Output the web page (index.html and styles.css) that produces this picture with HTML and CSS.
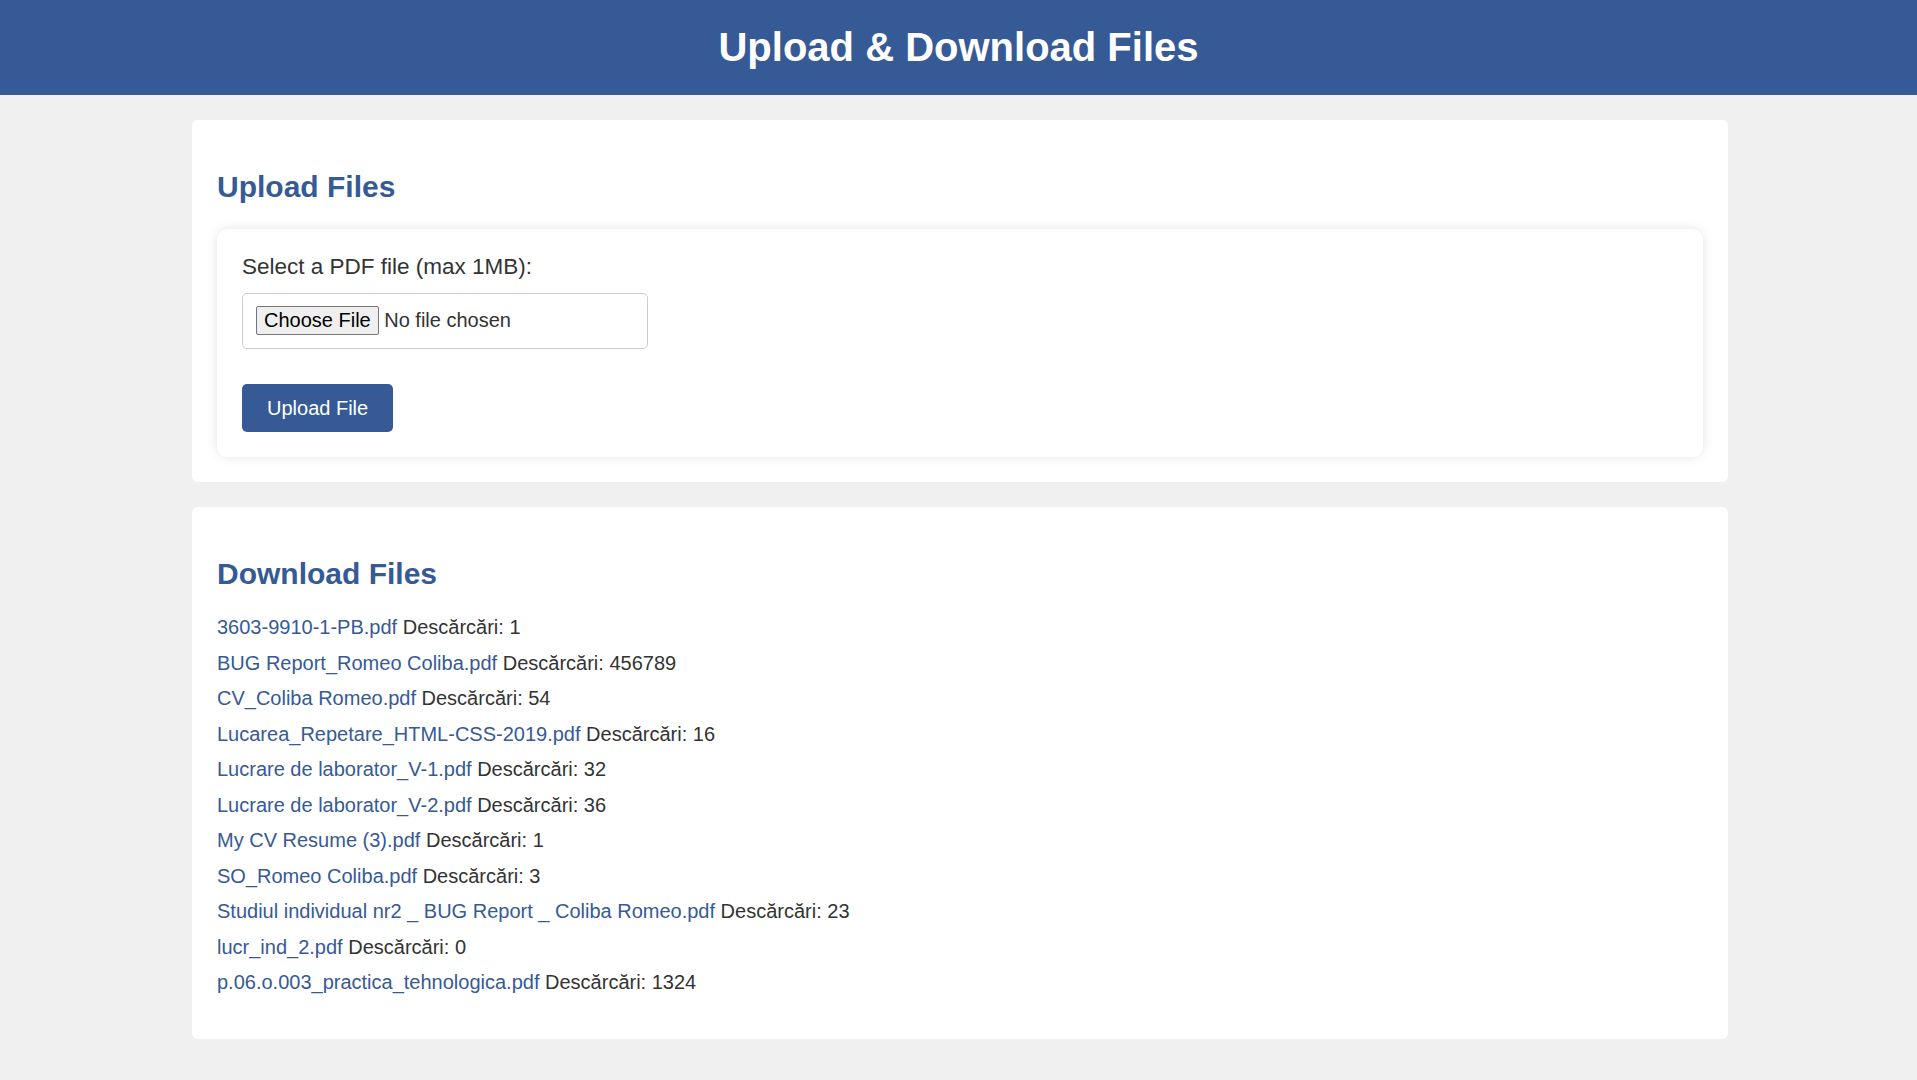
FILE: index.html
```html
<!DOCTYPE html>
<html lang="ro">
<head>
<meta charset="utf-8">
<title>Upload &amp; Download Files</title>
<link rel="stylesheet" href="styles.css">
</head>
<body>
<header class="site-header">
  <h1 class="site-title">Upload &amp; Download Files</h1>
</header>
<main class="content">
  <section class="card">
    <h2 class="card-title">Upload Files</h2>
    <form class="upload-form">
      <label class="upload-label" for="file">Select a PDF file (max 1MB):</label>
      <input class="file-input" type="file" id="file" accept="application/pdf">
      <button class="upload-btn" type="button">Upload File</button>
    </form>
  </section>
  <section class="card">
    <h2 class="card-title">Download Files</h2>
    <ul class="file-list">
      <li><a href="#">3603-9910-1-PB.pdf</a> Descărcări: 1</li>
      <li><a href="#">BUG Report_Romeo Coliba.pdf</a> Descărcări: 456789</li>
      <li><a href="#">CV_Coliba Romeo.pdf</a> Descărcări: 54</li>
      <li><a href="#">Lucarea_Repetare_HTML-CSS-2019.pdf</a> Descărcări: 16</li>
      <li><a href="#">Lucrare de laborator_V-1.pdf</a> Descărcări: 32</li>
      <li><a href="#">Lucrare de laborator_V-2.pdf</a> Descărcări: 36</li>
      <li><a href="#">My CV Resume (3).pdf</a> Descărcări: 1</li>
      <li><a href="#">SO_Romeo Coliba.pdf</a> Descărcări: 3</li>
      <li><a href="#">Studiul individual nr2 _ BUG Report _ Coliba Romeo.pdf</a> Descărcări: 23</li>
      <li><a href="#">lucr_ind_2.pdf</a> Descărcări: 0</li>
      <li><a href="#">p.06.o.003_practica_tehnologica.pdf</a> Descărcări: 1324</li>
    </ul>
  </section>
</main>
</body>
</html>
```
FILE: styles.css
```css
html, body {
  margin: 0;
  padding: 0;
}
body {
  background: #f0f0f0;
  color: #333;
  font-family: "Liberation Sans", Arial, sans-serif;
  font-size: 20px;
}
.site-header {
  background: #365a96;
  color: #fff;
  padding: 23.5px 0 25.5px;
  text-align: center;
}
.site-title {
  margin: 0;
  font-size: 40px;
  font-weight: bold;
  line-height: 46px;
}
.content {
  display: flex;
  flex-direction: column;
  gap: 25px;
  padding: 25px 0 0 3px;
}
.card {
  box-sizing: border-box;
  width: 1536px;
  margin: 0 auto;
  background: #fff;
  border-radius: 6px;
  padding: 25px;
}
.card-title {
  color: #365a96;
  font-size: 30px;
  font-weight: bold;
  line-height: 34.5px;
  margin: 24.9px 0;
}
.upload-form {
  background: #fff;
  border-radius: 10px;
  box-shadow: 0 0 12px rgba(0, 0, 0, 0.1);
  padding: 25px;
  display: flex;
  flex-direction: column;
  align-items: flex-start;
}
.upload-label {
  display: block;
  font-size: 22.5px;
  line-height: 26px;
  margin-bottom: 12.7px;
}
.file-input {
  box-sizing: border-box;
  width: 405.5px;
  height: 55.6px;
  padding: 12.5px;
  border: 1.25px solid #ccc;
  border-radius: 5px;
  font-family: "Liberation Sans", Arial, sans-serif;
  font-size: 20px;
  color: #333;
  margin-bottom: 35.7px;
  background: #fff;
}
.file-input::file-selector-button {
  font-family: "Liberation Sans", Arial, sans-serif;
  font-size: 20px;
  color: #000;
  background: #efefef;
  border: 1.25px solid #767676;
  border-radius: 2px;
  padding: 1.25px 7.5px;
  margin-right: 5px;
  height: 28.4px;
}
.upload-btn {
  background: #365a96;
  color: #fff;
  border: none;
  border-radius: 5px;
  font-family: "Liberation Sans", Arial, sans-serif;
  font-size: 20px;
  line-height: 23px;
  padding: 12.35px 25px;
  cursor: pointer;
}
.file-list {
  list-style: none;
  margin: 0 0 19.8px;
  padding: 0;
  display: flex;
  flex-direction: column;
  gap: 12.5px;
  line-height: 23px;
}
.file-list a {
  color: #365a96;
  text-decoration: none;
}
```
